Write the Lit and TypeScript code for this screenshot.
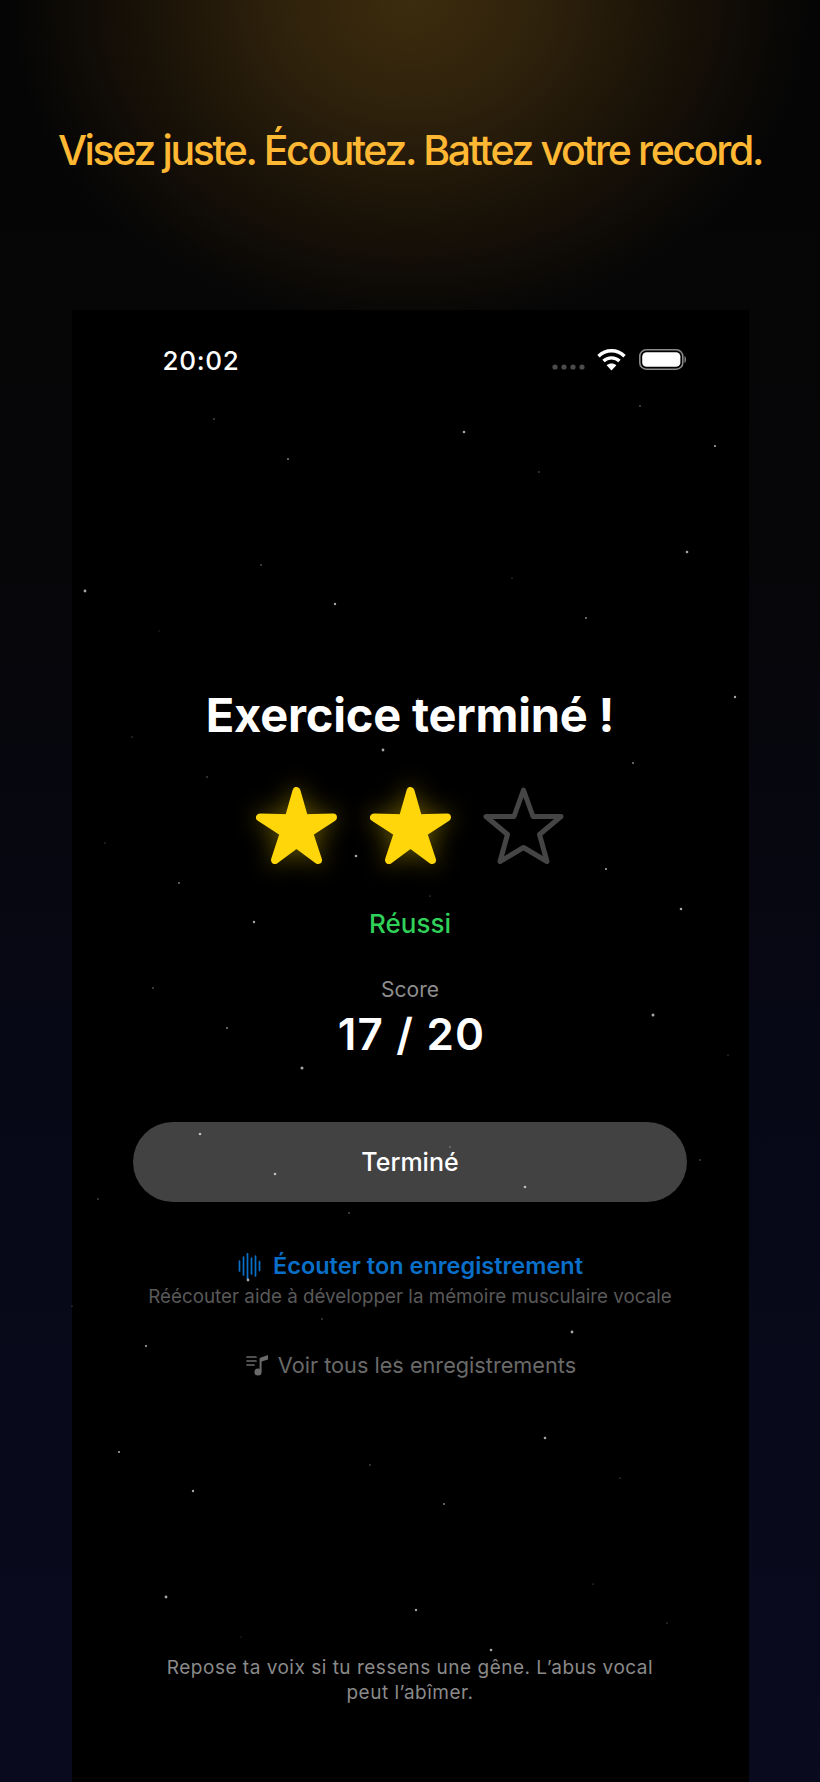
import { LitElement, html, css, svg } from "lit";
import { customElement } from "lit/decorators.js";

const DOTS: [number, number, number][] = [
  [214,419,1.5],[464,432,2.6],[640,406,1.6],[715,446,2.2],[288,459,2],[539,472,1.3],[261,565,1.6],[687,552,2.6],[512,578,1],[85,591,2.8],[335,604,2.4],[586,618,2],[159,631,0.9],[735,697,2.4],[418,699,1.6],
  [383,750,2.8],[356,856,2.6],[430,896,1.2],[254,922,2.4],[560,723,1],
  [132,737,1.2],[207,777,1.4],[633,763,2],[105,843,1.1],[606,869,2.2],[179,883,1.8],[681,909,2.6],[153,988,1.6],[653,1015,3],[227,1028,2],[728,1055,1.1],[302,1068,3],[700,1160,1.3],[98,1199,1.4],
  [200,1134,2.6],[275,1174,2.6],[450,1147,1.4],[525,1187,2.6],[349,1213,1.6],[248,1280,2.8],[497,1293,1.2],[322,1319,1.3],[572,1332,2.8],[146,1346,2.2],[397,1360,1.2],[72,1306,1],
  [119,1452,2.2],[545,1438,2.6],[370,1465,1.4],[620,1478,1.2],[193,1491,2.4],[444,1504,2],[593,1584,1],[166,1597,2.8],[416,1610,2.4],[667,1623,1.2],[241,1637,0.9],[491,1650,2.6],
];

@customElement("app-root")
export class AppRoot extends LitElement {
  static styles = css`
    :host { display: block; }
    .page {
      position: relative; width: 820px; height: 1782px; overflow: hidden;
      display: flex; flex-direction: column; align-items: center;
      font-family: Inter, "Noto Sans", sans-serif; color: #fff;
      background:
        radial-gradient(ellipse 400px 335px at 410px 0px, #3c2c0e 0%, #2f220c 32%, #181107 68%, rgba(10,8,4,0) 100%),
        linear-gradient(to bottom, #050505 0%, #060608 30%, #070816 60%, #090a1e 100%);
    }
    .headline {
      margin: 0; height: 310px; box-sizing: border-box; padding-top: 126px;
      font-size: 41px; line-height: 48px; font-weight: 500; letter-spacing: -2.35px;
      color: #ffb833; white-space: nowrap;
    }
    .phone {
      width: 677px; flex: 1; background: #000; display: flex; flex-direction: column;
      align-items: center;
    }
    .status {
      align-self: stretch; height: 70px; box-sizing: border-box; padding: 35px 62px 0 91px;
      display: flex; justify-content: space-between; align-items: flex-start;
    }
    .time { font-size: 26px; line-height: 31px; font-weight: 500; letter-spacing: 0.7px; }
    .sys { display: flex; align-items: center; margin-top: 3px; }
    .sys svg { display: block; }
    .title {
      margin: 307px 0 0; font-size: 47px; line-height: 56px; font-weight: 700; letter-spacing: -0.2px;
    }
    .rating { display: flex; gap: 32.5px; margin-top: 44px; }
    .rating svg { display: block; width: 81px; height: 77px; overflow: visible; }
    .on { filter: drop-shadow(0 0 12px rgba(255, 214, 0, 0.4)); }
    .verdict { margin-top: 44px; font-size: 26px; line-height: 32px; font-weight: 500; color: #30d158; }
    .score-label { margin-top: 37px; font-size: 21px; line-height: 26px; color: #8e8e8e; }
    .score { margin: 4px 0 0 3px; font-size: 44px; line-height: 54px; font-weight: 600; letter-spacing: 1.2px; }
    .done {
      margin-top: 61px; width: 554px; height: 80px; border-radius: 40px; background: #424242;
      display: flex; align-items: center; justify-content: center;
      font-size: 25px; font-weight: 500;
    }
    .listen {
      margin-top: 49px; display: flex; align-items: center; gap: 12px;
      font-size: 23.5px; line-height: 30px; font-weight: 600; color: #0a6fc9;
    }
    .listen svg, .all svg { display: block; }
    .hint { margin-top: 4px; font-size: 18.8px; line-height: 24px; color: #595959; }
    .all {
      margin-top: 42px; display: flex; align-items: center; gap: 9px;
      font-size: 21.7px; line-height: 28px; color: #6a6a6a;
    }
    .warn {
      margin-top: auto; margin-bottom: 77px; width: 510px; text-align: center;
      font-size: 19px; line-height: 24.5px; letter-spacing: 0.5px; color: #8a8a8a;
    }
    .sky { position: absolute; inset: 0; width: 820px; height: 1782px; pointer-events: none; }
  `;

  private star(on: boolean) {
    const filled = "M40.5 4 L48.2 31.2 L77 30.5 L53.1 45.9 L62 73 L40.5 57 L19 73 L27.9 45.9 L4 30.5 L32.8 31.2 Z";
    const empty = "M40.5 3 L50 29.5 L78 29.5 L56.5 47.5 L64 74.5 L40.5 60.5 L17 74.5 L24.5 47.5 L3 29.5 L31 29.5 Z";
    return html`<svg class=${on ? "on" : ""} viewBox="0 0 81 77">
      ${on
        ? svg`<path d=${filled} fill="#ffd60a" stroke="#ffd60a" stroke-width="8" stroke-linejoin="round"/>`
        : svg`<path d=${empty} fill="none" stroke="#454545" stroke-width="5" stroke-linejoin="round"/>`}
    </svg>`;
  }

  render() {
    const bars: [number, number][] = [[1.5, 5],[5.5, 9],[9.5, 12.5],[13.5, 8],[17.5, 10],[21.5, 4.5]];
    return html`<div class="page">
      <h1 class="headline">Visez juste. Écoutez. Battez votre record.</h1>
      <section class="phone">
        <div class="status">
          <span class="time">20:02</span>
          <div class="sys">
            <svg width="136" height="24" viewBox="0 0 136 24">
              <g fill="#4c4c4c"><circle cx="4" cy="19" r="2.6"/><circle cx="13" cy="19" r="2.6"/><circle cx="22" cy="19" r="2.6"/><circle cx="31" cy="19" r="2.6"/></g>
              <g fill="none" stroke="#fff" stroke-width="3.4">
                <path d="M47.5 8.2 C55 1 66 1 73.5 8.2"/>
                <path d="M52.5 13 C57 8.8 64 8.8 68.5 13"/>
              </g>
              <path d="M60.5 22.5 L55.6 17.2 C58.4 14.8 62.6 14.8 65.4 17.2 Z" fill="#fff"/>
              <rect x="88.8" y="1.8" width="43" height="19.4" rx="6.5" fill="none" stroke="#8a8a8a" stroke-width="1.6"/>
              <rect x="91.2" y="4.2" width="38.2" height="14.6" rx="4.4" fill="#fff"/>
              <path d="M133.5 8 C135.5 8.6 135.5 14.4 133.5 15 Z" fill="#8a8a8a"/>
            </svg>
          </div>
        </div>
        <h2 class="title">Exercice terminé !</h2>
        <div class="rating">${this.star(true)}${this.star(true)}${this.star(false)}</div>
        <div class="verdict">Réussi</div>
        <div class="score-label">Score</div>
        <div class="score">17 / 20</div>
        <div class="done">Terminé</div>
        <div class="listen">
          <svg width="24" height="26" viewBox="-1 0 24 26" fill="none" stroke="#0a6fc9" stroke-width="1.7" stroke-linecap="round">
            ${bars.map(([x, h]) => svg`<line x1=${x} x2=${x} y1=${13 - h} y2=${13 + h}/>`)}
          </svg>
          <span>Écouter ton enregistrement</span>
        </div>
        <div class="hint">Réécouter aide à développer la mémoire musculaire vocale</div>
        <div class="all">
          <svg width="25" height="22" viewBox="-2 0 25 22" fill="none">
            <g stroke="#6a6a6a" stroke-width="1.7" stroke-linecap="round">
              <line x1="1" x2="10" y1="3" y2="3"/><line x1="1" x2="10" y1="7" y2="7"/><line x1="1" x2="8" y1="11" y2="11"/>
            </g>
            <path d="M13.6 17.5 V4 L22 1 V5.4 L15.6 7.4 V17.5" fill="#6a6a6a"/>
            <circle cx="12" cy="18" r="3.6" fill="#6a6a6a"/>
          </svg>
          <span>Voir tous les enregistrements</span>
        </div>
        <div class="warn">Repose ta voix si tu ressens une gêne. L’abus vocal peut l’abîmer.</div>
      </section>
      <svg class="sky" viewBox="0 0 820 1782">
        ${DOTS.map(([x, y, d]) => svg`<circle cx=${x} cy=${y} r=${d / 2} fill="#fff" opacity=${d > 2 ? 0.65 : 0.5}/>`)}
      </svg>
    </div>`;
  }
}
